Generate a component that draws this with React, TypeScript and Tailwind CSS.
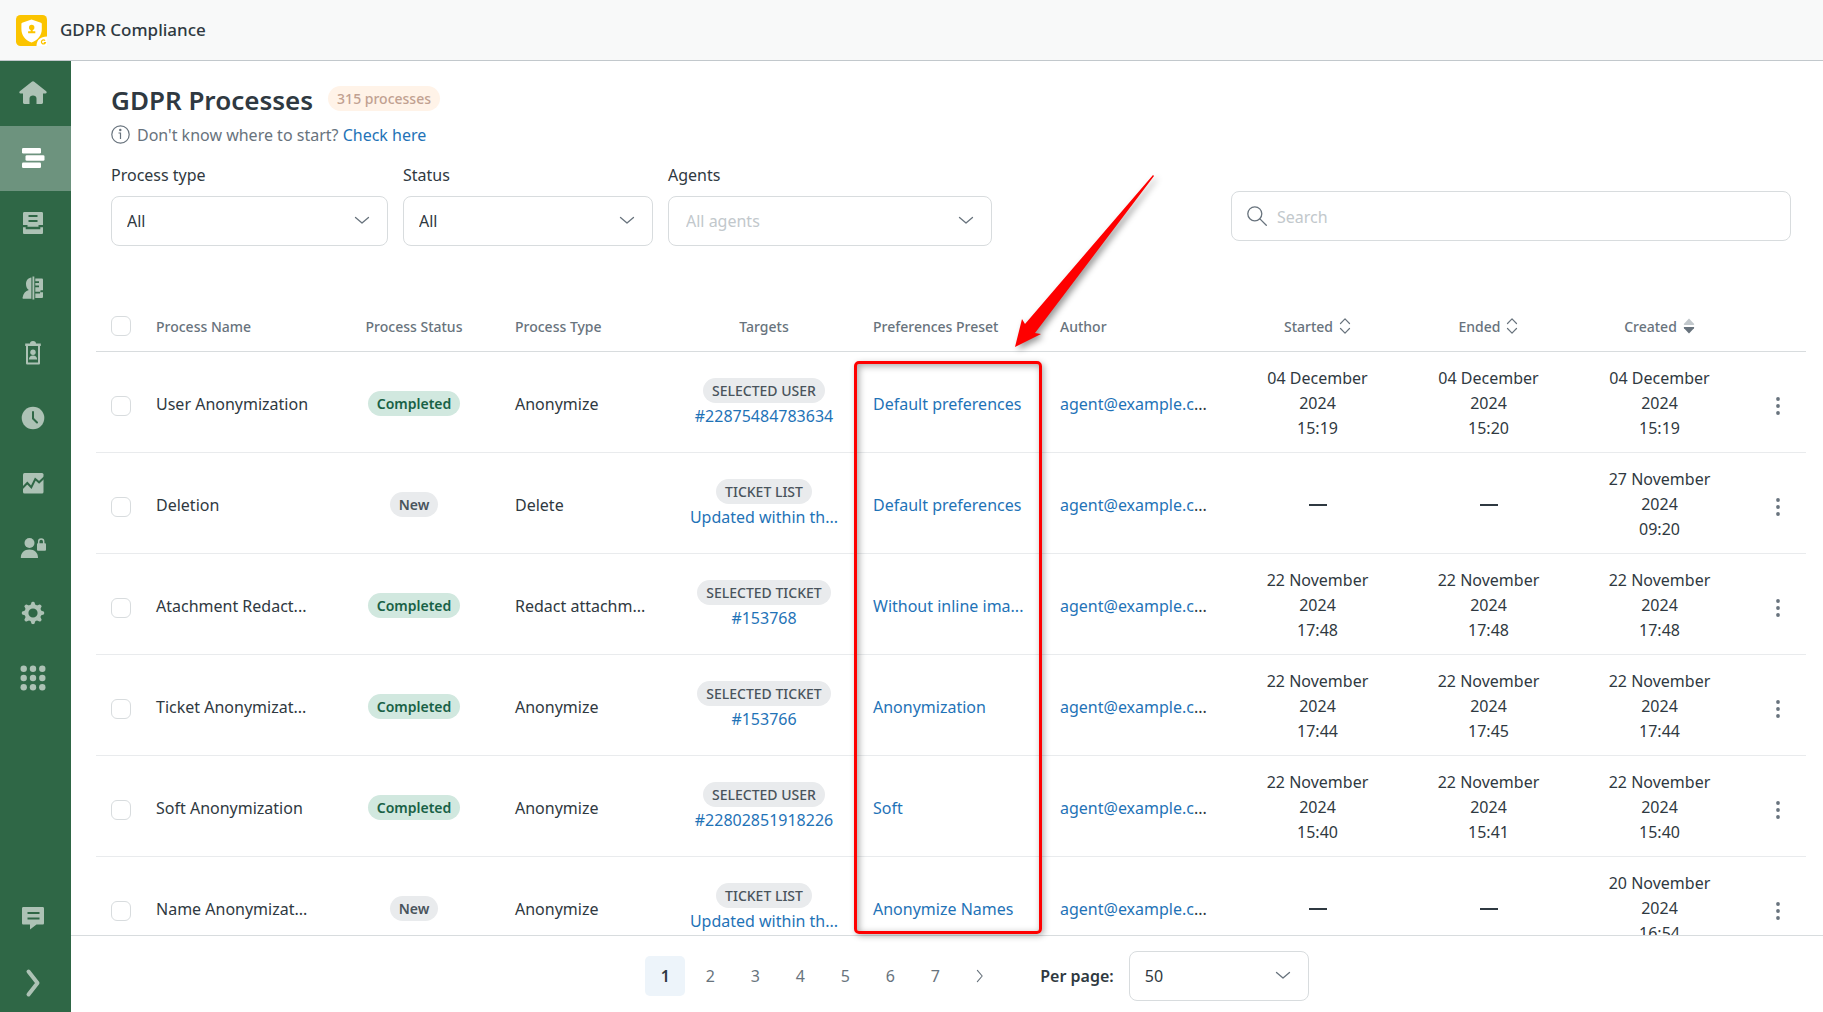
import React from "react";

const CELL = "px-[15px] pt-1 align-middle";
const LINK = "text-[#1f73b7] hover:underline";
const ICON = "#adc2b5";
const GREEN = "#2f6746";

type Row = {
  name: string;
  done: boolean;
  type: string;
  tag: string;
  target: string;
  preset: string;
  started?: string[];
  ended?: string[];
  created: string[];
};

const rows: Row[] = [
  { name: "User Anonymization", done: true, type: "Anonymize", tag: "SELECTED USER", target: "#22875484783634", preset: "Default preferences", started: ["04 December", "2024", "15:19"], ended: ["04 December", "2024", "15:20"], created: ["04 December", "2024", "15:19"] },
  { name: "Deletion", done: false, type: "Delete", tag: "TICKET LIST", target: "Updated within th...", preset: "Default preferences", created: ["27 November", "2024", "09:20"] },
  { name: "Atachment Redact...", done: true, type: "Redact attachm...", tag: "SELECTED TICKET", target: "#153768", preset: "Without inline ima...", started: ["22 November", "2024", "17:48"], ended: ["22 November", "2024", "17:48"], created: ["22 November", "2024", "17:48"] },
  { name: "Ticket Anonymizat...", done: true, type: "Anonymize", tag: "SELECTED TICKET", target: "#153766", preset: "Anonymization", started: ["22 November", "2024", "17:44"], ended: ["22 November", "2024", "17:45"], created: ["22 November", "2024", "17:44"] },
  { name: "Soft Anonymization", done: true, type: "Anonymize", tag: "SELECTED USER", target: "#22802851918226", preset: "Soft", started: ["22 November", "2024", "15:40"], ended: ["22 November", "2024", "15:41"], created: ["22 November", "2024", "15:40"] },
  { name: "Name Anonymizat...", done: false, type: "Anonymize", tag: "TICKET LIST", target: "Updated within th...", preset: "Anonymize Names", created: ["20 November", "2024", "16:54"] },
];

const navIcons: { label: string; icon: React.ReactNode }[] = [
  {
    label: "Home",
    icon: (
      <path d="M15 3.2c.5 0 .9.2 1.2.5l12 9.6c.9.8.5 2.2-.7 2.2H25V24.6c0 .9-.5 1.4-1.400 1.400H18.500v-5.500c0-2-1.500-3-3.500-3s-3.500 1-3.500 3V26H6.400C5.500 26 5 25.500 5 24.600V15.500H2.500c-1.200 0-1.600-1.400-.7-2.200l12-9.600c.3-.3.700-.5 1.200-.5z" />
    ),
  },
  {
    label: "Processes",
    icon: (
      <>
        <rect x="4" y="5" width="19" height="5.500" rx="1.300" />
        <rect x="7.500" y="12.200" width="19" height="5.500" rx="1.300" />
        <rect x="4" y="19.500" width="19" height="5.500" rx="1.300" />
      </>
    ),
  },
  {
    label: "Ticket lists",
    icon: (
      <>
        <path fillRule="evenodd" d="M6.500 4h17c1 0 1.500.500 1.500 1.500V17h-4.500v1.700h-11V17H5V5.500C5 4.500 5.500 4 6.500 4zM10.500 7v2h9V7zM10.500 12v2h9v-2z" />
        <path d="M5 19.200h2.700v2h14.600v-2H25v5.600c0 .9-.5 1.200-1.400 1.200H6.400C5.500 26 5 25.700 5 24.800z" />
      </>
    ),
  },
  {
    label: "User lists",
    icon: (
      <>
        <path d="M13.400 4.500v21.200H5.600c-.9 0-1.200-.5-1-1.300.6-3.700 3-6.400 6.200-7.300-1.700-1.100-2.800-3-2.800-6 0-3.600 2.100-6.300 5.400-6.600z" />
        <rect x="14.500" y="3.500" width="1.800" height="23" />
        <path fillRule="evenodd" d="M17.300 5.500h6.400c.8 0 1.300.5 1.300 1.300v10.400h-2.500v1.500h-5.200zM17.300 8.300v1.700h3.700V8.300zM17.300 12.500v1.700h3.700v-1.700z" />
        <path d="M17.300 20.500h4.700v-1.300h3v4.600c0 .8-.5 1.200-1.300 1.200h-6.400z" />
      </>
    ),
  },
  {
    label: "Audit",
    icon: (
      <>
        <path fillRule="evenodd" d="M12 5.500c0-1.500.9-2.500 3-2.500s3 1 3 2.500h4.800V8H22v17c0 1-.5 1.500-1.500 1.500h-11C8.500 26.500 8 26 8 25V8h-.8V5.500zM10 8v16.500h10V8z" />
        <circle cx="15" cy="14.200" r="2.700" />
        <path d="M10.800 21.500c.2-2.600 1.800-4 4.200-4s4 1.400 4.200 4z" />
      </>
    ),
  },
  {
    label: "Schedule",
    icon: (
      <>
        <circle cx="15" cy="15" r="11.300" />
        <path d="M15 9v6.500l4 4" fill="none" stroke={GREEN} strokeWidth="2" strokeLinecap="round" />
      </>
    ),
  },
  {
    label: "Reports",
    icon: (
      <>
        <rect x="5" y="5" width="20.500" height="20.500" rx="1.500" />
        <path d="M4 20.500l5.300-5.500 4 4.300 4-8.300 3.800 3.300 5.400-5" fill="none" stroke={GREEN} strokeWidth="2" />
      </>
    ),
  },
  {
    label: "Access",
    icon: (
      <>
        <circle cx="11.500" cy="10" r="5" />
        <path d="M2.800 25c0-5.500 3.400-8.500 8.600-8.500S20 19.500 20 25z" />
        <path d="M20.700 11V8.600a2.500 2.500 0 0 1 5 0V11" fill="none" stroke={ICON} strokeWidth="1.500" />
        <rect x="19" y="10.300" width="9" height="7.500" rx="1" />
      </>
    ),
  },
  {
    label: "Settings",
    icon: (
      <>
        <path fillRule="evenodd" d="M15 6.500a8.500 8.500 0 1 0 0 17 8.500 8.500 0 0 0 0-17zm0 3.900a4.600 4.600 0 1 1 0 9.200 4.600 4.600 0 0 1 0-9.200z" />
        {[0, 45, 90, 135, 180, 225, 270, 315].map((a) => (
          <path key={a} d="M12.200 8l1.300-3.600c.3-.8 2.700-.8 3 0L17.800 8z" transform={`rotate(${a} 15 15)`} />
        ))}
      </>
    ),
  },
  {
    label: "Apps",
    icon: (
      <>
        {[5.7, 15, 24.3].map((y) => [5.7, 15, 24.3].map((x) => <circle key={`${x}-${y}`} cx={x} cy={y} r="3.200" />))}
      </>
    ),
  },
];

function Chevron({ className = "h-[9px] w-4" }: { className?: string }) {
  return (
    <svg viewBox="0 0 16 9" fill="none" stroke="#68737d" strokeWidth="1.300" strokeLinecap="round" strokeLinejoin="round" className={className} aria-hidden="true">
      <path d="M1.500 1.500L8 7l6.500-5.500" />
    </svg>
  );
}

function SelectBox({ id, value, muted = false }: { id: string; value: string; muted?: boolean }) {
  return (
    <div className="relative">
      <select
        id={id}
        defaultValue={value}
        className={`h-[50px] w-full appearance-none rounded-lg border border-[#d8dcde] bg-white pr-10 text-base ${muted ? "pl-[17px] text-[#c2c8cc]" : "pl-[15px] text-[#2f3941]"}`}
      >
        <option>{value}</option>
      </select>
      <Chevron className="pointer-events-none absolute top-5 right-[18px] h-[9px] w-4" />
    </div>
  );
}

function Filter({ id, label, value, width, muted }: { id: string; label: string; value: string; width: string; muted?: boolean }) {
  return (
    <div className={width}>
      <label htmlFor={id} className="mb-2 block text-base leading-[25px]">
        {label}
      </label>
      <SelectBox id={id} value={value} muted={muted} />
    </div>
  );
}

function Check({ id, label }: { id: string; label: string }) {
  return (
    <label htmlFor={id} className="flex">
      <input id={id} type="checkbox" aria-label={label} className="size-5 appearance-none rounded-[6px] border border-[#d8dcde] bg-white checked:bg-[#1f73b7]" />
    </label>
  );
}

function Sort({ label, active = false }: { label: string; active?: boolean }) {
  return (
    <button type="button" className="inline-flex items-center gap-[6px] font-medium">
      {label}
      {active ? (
        <svg viewBox="0 0 12 16" className="mb-0.5 h-4 w-3" aria-hidden="true">
          <path d="M6 0.500l5 5.300c.4.500.2 1.200-.5 1.200h-9C.8 7 .6 6.300 1 5.800z" fill="#c2c8cc" />
          <path d="M6 15.500l5-5.300c.4-.500.2-1.200-.500-1.200h-9c-.700 0-.900.700-.500 1.200z" fill="#68737d" />
        </svg>
      ) : (
        <svg viewBox="0 0 12 16" className="mb-0.5 h-4 w-3" fill="none" stroke="#68737d" strokeWidth="1.200" strokeLinecap="round" strokeLinejoin="round" aria-hidden="true">
          <path d="M1.500 5.500L6 .8l4.500 4.700M1.500 10.500L6 15.200l4.500-4.700" />
        </svg>
      )}
    </button>
  );
}

function DateCell({ lines }: { lines?: string[] }) {
  return (
    <td className={`${CELL} text-center leading-[25px]`}>
      {lines ? lines.map((l) => <span key={l} className="block">{l}</span>) : <span className="mx-auto block h-[2px] w-[18px] bg-[#2f3941]" role="img" aria-label="None" />}
    </td>
  );
}

export default function App() {
  return (
    <div className="relative flex h-screen flex-col overflow-hidden bg-white font-['Noto_Sans',sans-serif] text-base text-[#2f3941]">
      <header className="flex h-[61px] shrink-0 items-center gap-[13px] border-b border-[#c2c8cc] bg-[#f8f9f9] pl-4">
        <svg viewBox="0 0 31 31" className="size-[31px]" aria-hidden="true">
          <rect width="31" height="31" rx="4.500" fill="#fbc400" />
          <path d="M15.500 4.500L25 7.800c.6.200.8.600.8 1.200V14c0 6.200-3.600 11-10.300 13.400C8.800 25 5.400 20.200 5.400 14V9c0-.6.200-1 .8-1.200z" fill="#fff" />
          <circle cx="15.700" cy="12.500" r="2.700" fill="#fbc400" />
          <path d="M14.700 14h2v2.300h2.600v2h-7.200v-2h2.600z" fill="#fbc400" />
          <path d="M31 21.500V31H20.500c0-6 4-9.500 10.500-9.500z" fill="#fff" />
          <path d="M29 25.700a2 2 0 1 0 .3 2h-1.500" stroke="#fbc400" strokeWidth="1.300" fill="none" />
        </svg>
        <span className="text-[17px] font-medium">GDPR Compliance</span>
      </header>

      <div className="flex min-h-0 flex-1">
        <nav className="flex w-[71px] shrink-0 flex-col bg-[#2f6746]">
          {navIcons.map((n, i) => (
            <button key={n.label} type="button" aria-label={n.label} className={`flex h-[65px] w-full items-center pb-0.5 pl-[18px] ${i === 1 ? "bg-[#6d937e]" : ""}`}>
              <svg viewBox="0 0 30 30" className="size-[30px]" fill={i === 1 ? "#fff" : ICON} aria-hidden="true">
                {n.icon}
              </svg>
            </button>
          ))}
          <button type="button" aria-label="Feedback" className="mt-auto flex h-[65px] items-center pb-0.5 pl-[18px]">
            <svg viewBox="0 0 30 30" className="size-[30px]" fill={ICON} aria-hidden="true">
              <path fillRule="evenodd" d="M5.500 4h19c1 0 1.500.5 1.500 1.500V20c0 1-.5 1.500-1.500 1.500h-6L12 26.500v-5H5.500C4.500 21.500 4 21 4 20V5.500C4 4.500 4.500 4 5.500 4zM9.500 9v2h12V9zM9.500 14.500v2h12v-2z" />
            </svg>
          </button>
          <button type="button" aria-label="Expand menu" className="flex h-[61px] items-center pt-0.5 pl-[18px]">
            <svg viewBox="0 0 30 30" className="size-[30px]" fill="none" stroke={ICON} strokeWidth="4" strokeLinecap="round" strokeLinejoin="round" aria-hidden="true">
              <path d="M10.500 3.500L19.500 15l-9 11.500" />
            </svg>
          </button>
        </nav>

        <main className="flex min-w-0 flex-1 flex-col">
          <div className="flex items-start justify-between pt-5 pr-8 pl-10">
            <div>
              <div className="flex h-[38px] items-center gap-[15px]">
                <h1 className="text-[26px] font-semibold">GDPR Processes</h1>
                <span className="mb-1 rounded-full bg-[#fff3e8] px-[9px] text-[14px] leading-[25px] font-medium text-[#c1a191]">315 processes</span>
              </div>
              <p className="flex h-[31px] items-center gap-[7px] text-[#68737d]">
                <svg viewBox="0 0 19 19" className="size-[19px]" fill="none" stroke="#68737d" strokeWidth="1.200" aria-hidden="true">
                  <circle cx="9.500" cy="9.500" r="8.700" />
                  <path d="M7.500 8h2v6" />
                  <circle cx="9.300" cy="5" r=".6" fill="#68737d" />
                </svg>
                <span>
                  Don't know where to start?{" "}
                  <a href="#" className={LINK}>Check here</a>
                </span>
              </p>
              <div className="mt-[13px] flex gap-[15px]">
                <Filter id="ptype" label="Process type" value="All" width="w-[277px]" />
                <Filter id="pstatus" label="Status" value="All" width="w-[250px]" />
                <Filter id="agents" label="Agents" value="All agents" width="w-[324px]" muted />
              </div>
            </div>
            <label htmlFor="search" className="mt-[110px] flex h-[50px] w-[560px] items-center gap-[10px] rounded-lg border border-[#d8dcde] px-[15px]">
              <svg viewBox="0 0 20 20" className="size-5 shrink-0" fill="none" stroke="#68737d" strokeWidth="1.300" strokeLinecap="round" aria-hidden="true">
                <circle cx="7.800" cy="7.800" r="7" />
                <path d="M12.900 12.900l6.400 6.400" />
              </svg>
              <input id="search" type="search" aria-label="Search" placeholder="Search" className="min-w-0 flex-1 bg-transparent pt-0.5 outline-none placeholder:text-[#c2c8cc]" />
            </label>
          </div>

          <div className="mt-[53px] min-h-0 flex-1 overflow-y-auto pr-[17px] pl-[25px] [scrollbar-width:none]">
            <table className="w-full table-fixed">
              <colgroup>
                <col className="w-[45px]" />
                <col className="w-[187px]" />
                <col className="w-[172px]" />
                <col className="w-[170px]" />
                <col className="w-[188px]" />
                <col className="w-[187px]" />
                <col className="w-[187px]" />
                <col className="w-[171px]" />
                <col className="w-[171px]" />
                <col className="w-[171px]" />
                <col className="w-[61px]" />
              </colgroup>
              <thead>
                <tr className="h-[52px] border-b border-[#d8dcde] text-left text-[14px] whitespace-nowrap text-[#68737d] [&>th]:font-medium">
                  <th className="pt-0.5 pl-[15px]"><Check id="all" label="Select all" /></th>
                  <th className={CELL}>Process Name</th>
                  <th className={`${CELL} text-center`}>Process Status</th>
                  <th className={CELL}>Process Type</th>
                  <th className={`${CELL} text-center`}>Targets</th>
                  <th className={CELL}>Preferences Preset</th>
                  <th className={CELL}>Author</th>
                  <th className={`${CELL} text-center`}><Sort label="Started" /></th>
                  <th className={`${CELL} text-center`}><Sort label="Ended" /></th>
                  <th className={`${CELL} text-center`}><Sort label="Created" active /></th>
                  <th aria-label="Actions" />
                </tr>
              </thead>
              <tbody>
                {rows.map((r, i) => (
                  <tr key={r.name} className="h-[101px] border-b border-[#e9ebed] whitespace-nowrap">
                    <td className="pt-2 pl-[15px]"><Check id={`row-${i}`} label={`Select ${r.name}`} /></td>
                    <td className={CELL}>{r.name}</td>
                    <td className={`${CELL} text-center`}>
                      <span className={`inline-block rounded-full px-[9px] text-[14px] leading-[25px] font-semibold ${r.done ? "bg-[#d1e8df] text-[#186146]" : "bg-[#e9ebed] text-[#49545c]"}`}>
                        {r.done ? "Completed" : "New"}
                      </span>
                    </td>
                    <td className={CELL}>{r.type}</td>
                    <td className={`${CELL} text-center`}>
                      <span className="mx-auto block w-fit rounded-full bg-[#e9ebed] px-[9px] text-[14px] leading-[25px] font-medium text-[#49545c]">{r.tag}</span>
                      <a href="#" className={`block leading-[27px] ${LINK}`}>{r.target}</a>
                    </td>
                    <td className={CELL}><a href="#" className={LINK}>{r.preset}</a></td>
                    <td className={CELL}>
                      <a href="#" className={LINK}>agent@example.c</a>...
                    </td>
                    <DateCell lines={r.started} />
                    <DateCell lines={r.ended} />
                    <DateCell lines={r.created} />
                    <td className="pt-2">
                      <button type="button" aria-label={`Actions for ${r.name}`} className="mr-[17px] ml-auto flex size-[22px] items-center justify-center">
                        <svg viewBox="0 0 4 18" className="h-[18px] w-1" fill="#68737d" aria-hidden="true">
                          <circle cx="2" cy="2" r="1.900" />
                          <circle cx="2" cy="9" r="1.900" />
                          <circle cx="2" cy="16" r="1.900" />
                        </svg>
                      </button>
                    </td>
                  </tr>
                ))}
              </tbody>
            </table>
          </div>

          <footer className="flex h-[77px] shrink-0 items-center justify-center border-t border-[#d8dcde] pt-[3px] pl-[60px]">
            <div className="flex gap-[5px] text-[#68737d]">
              {[1, 2, 3, 4, 5, 6, 7].map((p) => (
                <button key={p} type="button" className={`size-10 rounded-[5px] ${p === 1 ? "bg-[#edf4fa] font-semibold text-[#2f3941]" : ""}`}>
                  {p}
                </button>
              ))}
              <button type="button" aria-label="Next page" className="flex size-10 items-center justify-center">
                <Chevron className="h-2 w-3.5 -rotate-90" />
              </button>
            </div>
            <label htmlFor="perpage" className="mr-[15px] ml-10 font-semibold">Per page:</label>
            <div className="w-[180px]">
              <SelectBox id="perpage" value="50" />
            </div>
          </footer>
        </main>
      </div>

      <div className="pointer-events-none absolute top-[361px] left-[854px] h-[573px] w-[188px] rounded-[5px] border-[3px] border-[#fe0000] shadow-[2px_2px_6px_rgba(0,0,0,0.3),inset_2px_2px_7px_rgba(0,0,0,0.35)]" />
      <svg viewBox="0 0 160 190" className="pointer-events-none absolute top-[170px] left-[1005px] h-[190px] w-[160px] drop-shadow-[3px_3px_3px_rgba(0,0,0,0.4)]" aria-hidden="true">
        <path d="M148 5L20 154l-3-5-7 28 26-13-6-1L149 6z" fill="#fe0000" />
      </svg>
    </div>
  );
}
